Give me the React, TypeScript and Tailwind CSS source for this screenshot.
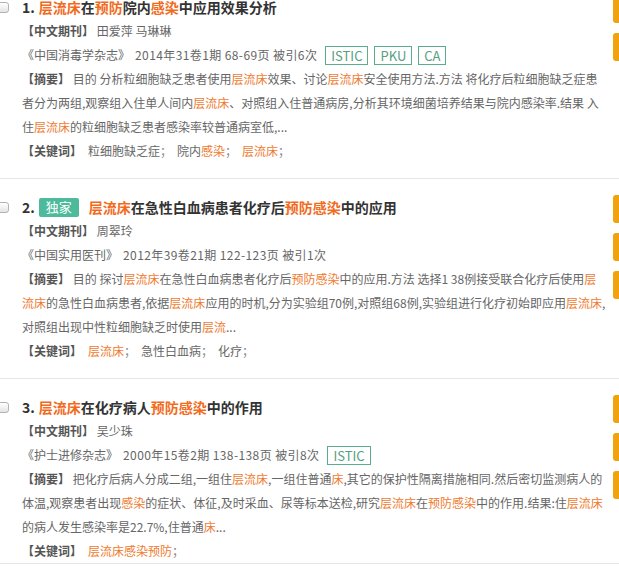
import React from "react";

type Item = {
  no: number;
  title: string;
  exclusive?: boolean;
  author: string;
  journal: string;
  meta: string;
  tags: string[];
  abstract: string[];
  keywords: string[];
  buttons: number;
};

// {...} marks a highlighted search term
const ITEMS: Item[] = [
  {
    no: 1,
    title: "{层流床}在{预防}院内{感染}中应用效果分析",
    author: "田爱萍 马琳琳",
    journal: "《中国消毒学杂志》",
    meta: "2014年31卷1期 68-69页 被引6次",
    tags: ["ISTIC", "PKU", "CA"],
    abstract: [
      "目的 分析粒细胞缺乏患者使用{层流床}效果、讨论{层流床}安全使用方法.方法 将化疗后粒细胞缺乏症患",
      "者分为两组,观察组入住单人间内{层流床}、对照组入住普通病房,分析其环境细菌培养结果与院内感染率.结果 入",
      "住{层流床}的粒细胞缺乏患者感染率较普通病室低,...",
    ],
    keywords: ["粒细胞缺乏症", "院内{感染}", "{层流床}"],
    buttons: 2,
  },
  {
    no: 2,
    title: "{层流床}在急性白血病患者化疗后{预防感染}中的应用",
    exclusive: true,
    author: "周翠玲",
    journal: "《中国实用医刊》",
    meta: "2012年39卷21期 122-123页 被引1次",
    tags: [],
    abstract: [
      "目的 探讨{层流床}在急性白血病患者化疗后{预防感染}中的应用.方法 选择1 38例接受联合化疗后使用{层}",
      "{流床}的急性白血病患者,依据{层流床}应用的时机,分为实验组70例,对照组68例,实验组进行化疗初始即应用{层流床},",
      "对照组出现中性粒细胞缺乏时使用{层流}...",
    ],
    keywords: ["{层流床}", "急性白血病", "化疗"],
    buttons: 3,
  },
  {
    no: 3,
    title: "{层流床}在化疗病人{预防感染}中的作用",
    author: "吴少珠",
    journal: "《护士进修杂志》",
    meta: "2000年15卷2期 138-138页 被引8次",
    tags: ["ISTIC"],
    abstract: [
      "把化疗后病人分成二组,一组住{层流床},一组住普通{床},其它的保护性隔离措施相同.然后密切监测病人的",
      "体温,观察患者出现{感染}的症状、体征,及时采血、尿等标本送检,研究{层流床}在{预防感染}中的作用.结果:住{层流床}",
      "的病人发生感染率是22.7%,住普通{床}...",
    ],
    keywords: ["{层流床感染预防}"],
    buttons: 3,
  },
];

function Marked({ text, hl }: { text: string; hl: string }) {
  return (
    <>
      {text.split(/(\{[^}]+\})/).map((part, i) =>
        part.startsWith("{") ? (
          <span key={i} className={hl}>
            {part.slice(1, -1)}
          </span>
        ) : (
          <span key={i}>{part}</span>
        )
      )}
    </>
  );
}

function ResultItem({ item, first, last }: { item: Item; first: boolean; last: boolean }) {
  return (
    <div
      className={`flex w-[653px] border-b border-[#e6e6e6] ${first ? "-mt-[21px]" : ""} ${
        last ? "pb-0" : "pb-[15px]"
      }`}
    >
      <div className="flex w-[613px] shrink-0">
        <div className="-ml-[4px] mr-[13px] mt-[23px] h-[11px] w-[13px] shrink-0 rounded-[3px] border border-[#b3b3b3] bg-gradient-to-b from-white to-[#e4e4e4]" />
        <div className="pt-[16px] text-[12px] leading-[24px] text-[#666]">
          <div className="flex h-[24px] items-center text-[14px] font-bold text-[#333]">
            <span className="mr-[4px]">{item.no}.</span>
            {item.exclusive && (
              <span className="mr-[10px] inline-flex h-[19px] w-[40px] items-center justify-center rounded-[2px] bg-[#4dbb9b] text-[13px] font-normal text-white">
                独家
              </span>
            )}
            <span>
              <Marked text={item.title} hl="text-[#f26b1d]" />
            </span>
          </div>
          <div>
            <span className="font-bold text-[#555]">【中文期刊】</span> {item.author}
          </div>
          <div className="flex h-[24px] items-center whitespace-nowrap">
            <span>{item.journal}</span>
            <span className="ml-[5px] tracking-[0.4px]">{item.meta}</span>
            {item.tags.length > 0 && (
              <span className="ml-[8px] flex gap-[6px]">
                {item.tags.map((t) => (
                  <span
                    key={t}
                    className="flex h-[19px] items-center border border-[#5aae8c] px-[5px] text-[13px] leading-none text-[#55a080]"
                  >
                    {t}
                  </span>
                ))}
              </span>
            )}
          </div>
          <div className="whitespace-nowrap">
            {item.abstract.map((line, i) => (
              <div key={i}>
                {i === 0 && <span className="font-bold text-[#555]">【摘要】 </span>}
                <Marked text={line} hl="text-[#f07a2e]" />
              </div>
            ))}
          </div>
          <div className="flex items-center">
            <span className="mr-[6px] font-bold text-[#555]">【关键词】</span>
            {item.keywords.map((k, i) => (
              <span key={i} className="mr-[5px]">
                <Marked text={k} hl="text-[#f07a2e]" />
                <span className="text-[#888]">；</span>
              </span>
            ))}
          </div>
        </div>
      </div>
      <div className="flex w-[40px] shrink-0 flex-col gap-[10px] pt-[16px]">
        {Array.from({ length: item.buttons }).map((_, i) => (
          <div key={i} className="h-[28px] rounded-l-[3px] bg-[#f0a20f]" />
        ))}
      </div>
    </div>
  );
}

export default function App() {
  return (
    <div
      className="h-[567px] w-[619px] overflow-hidden bg-white"
      style={{ fontFamily: '"Noto Sans CJK SC", "Noto Sans", sans-serif' }}
    >
      {ITEMS.map((item, i) => (
        <ResultItem key={item.no} item={item} first={i === 0} last={i === ITEMS.length - 1} />
      ))}
    </div>
  );
}
